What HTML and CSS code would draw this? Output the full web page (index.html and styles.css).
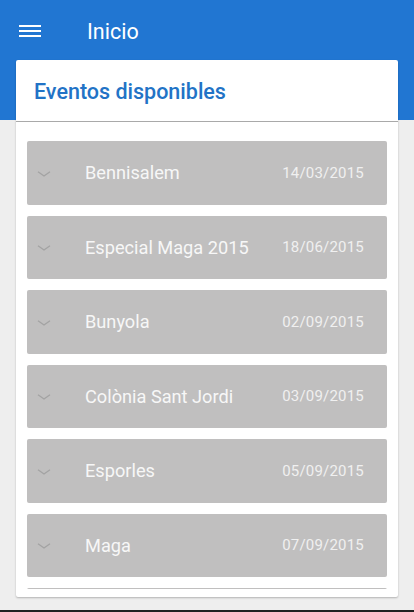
FILE: index.html
```html
<!DOCTYPE html>
<html lang="es">
<head>
    <meta charset="UTF-8">
    <meta name="viewport" content="width=device-width, initial-scale=1.0">
    <title>Inicio</title>
    <link rel="stylesheet" href="styles.css">
</head>
<body>

    <header class="app-bar">
        <button class="menu-btn" aria-label="Menú">
            <span></span><span></span><span></span>
        </button>
        <h1>Inicio</h1>
    </header>

    <main class="content">
        <section class="card">
            <h2 class="card-title">Eventos disponibles</h2>

            <div class="event-list">
                <div class="event">
                    <svg class="chevron" viewBox="0 0 14 6" width="14" height="6"><path d="M1 0.8 L7 5 L13 0.8" /></svg>
                    <span class="event-name">Bennisalem</span>
                    <span class="event-date">14/03/2015</span>
                </div>
                <div class="event">
                    <svg class="chevron" viewBox="0 0 14 6" width="14" height="6"><path d="M1 0.8 L7 5 L13 0.8" /></svg>
                    <span class="event-name">Especial Maga 2015</span>
                    <span class="event-date">18/06/2015</span>
                </div>
                <div class="event">
                    <svg class="chevron" viewBox="0 0 14 6" width="14" height="6"><path d="M1 0.8 L7 5 L13 0.8" /></svg>
                    <span class="event-name">Bunyola</span>
                    <span class="event-date">02/09/2015</span>
                </div>
                <div class="event">
                    <svg class="chevron" viewBox="0 0 14 6" width="14" height="6"><path d="M1 0.8 L7 5 L13 0.8" /></svg>
                    <span class="event-name">Colònia Sant Jordi</span>
                    <span class="event-date">03/09/2015</span>
                </div>
                <div class="event">
                    <svg class="chevron" viewBox="0 0 14 6" width="14" height="6"><path d="M1 0.8 L7 5 L13 0.8" /></svg>
                    <span class="event-name">Esporles</span>
                    <span class="event-date">05/09/2015</span>
                </div>
                <div class="event">
                    <svg class="chevron" viewBox="0 0 14 6" width="14" height="6"><path d="M1 0.8 L7 5 L13 0.8" /></svg>
                    <span class="event-name">Maga</span>
                    <span class="event-date">07/09/2015</span>
                </div>
                <!-- next row, only its top edge shows above the fold -->
                <div class="event"></div>
            </div>
        </section>
    </main>

    <div class="nav-edge"></div>

</body>
</html>
```

FILE: styles.css
```css
:root {
    --primary-color: #2176d2;
    --title-color: #2273c6;
    --page-bg: #eeeeee;
    --item-bg: #c0bfbf;
    --white-color: #fff;
}

* { box-sizing: border-box; margin: 0; padding: 0; }

html, body {
    height: 100%;
    overflow: hidden;
}

body {
    font-family: Roboto, "Noto Sans", sans-serif;
    background-color: var(--page-bg);
    display: flex;
    flex-direction: column;
}

.app-bar {
    height: 60px;
    background-color: var(--primary-color);
    display: flex;
    align-items: center;
    padding-left: 19px;
    flex-shrink: 0;
}

.menu-btn {
    width: 22px;
    display: flex;
    flex-direction: column;
    gap: 3px;
    background: none;
    border: none;
    margin-top: 1px;
}

.menu-btn span {
    display: block;
    height: 2px;
    background-color: var(--white-color);
}

.app-bar h1 {
    color: var(--white-color);
    font-size: 21.5px;
    font-weight: 400;
    margin-left: 46px;
    margin-top: 3px;
}

.content {
    background: linear-gradient(var(--primary-color) 60px, var(--page-bg) 60px);
    padding: 0 16px 12px;
    flex-shrink: 0;
}

.card {
    background-color: var(--white-color);
    border-radius: 2px;
    box-shadow: 0 1px 2px rgba(0,0,0,0.25);
    padding-bottom: 8px;
}

.card-title {
    height: 62px;
    display: flex;
    align-items: center;
    padding: 2px 0 0 18px;
    color: var(--title-color);
    font-size: 21.5px;
    font-weight: 500;
    border-bottom: 1px solid #a9a9a9;
}

.event-list {
    height: 467px;
    overflow: hidden;
    padding: 19px 11px 0;
    display: flex;
    flex-direction: column;
    gap: 11px;
}

.event {
    height: 63.5px;
    flex-shrink: 0;
    background-color: var(--item-bg);
    border-radius: 2px;
    display: flex;
    align-items: center;
    padding: 0 23px 0 10px;
    color: #f7f7f7;
}

.chevron {
    fill: none;
    stroke: #a3a3a3;
    stroke-width: 1.4;
    margin-right: 34px;
    margin-top: 2px;
}

.event-name {
    flex: 1;
    font-size: 18.2px;
}

.event-date {
    font-size: 15px;
    letter-spacing: 0.2px;
    color: #f0f0f0;
}

.nav-edge {
    margin-top: auto;
    height: 2px;
    background-color: #222;
}
```
